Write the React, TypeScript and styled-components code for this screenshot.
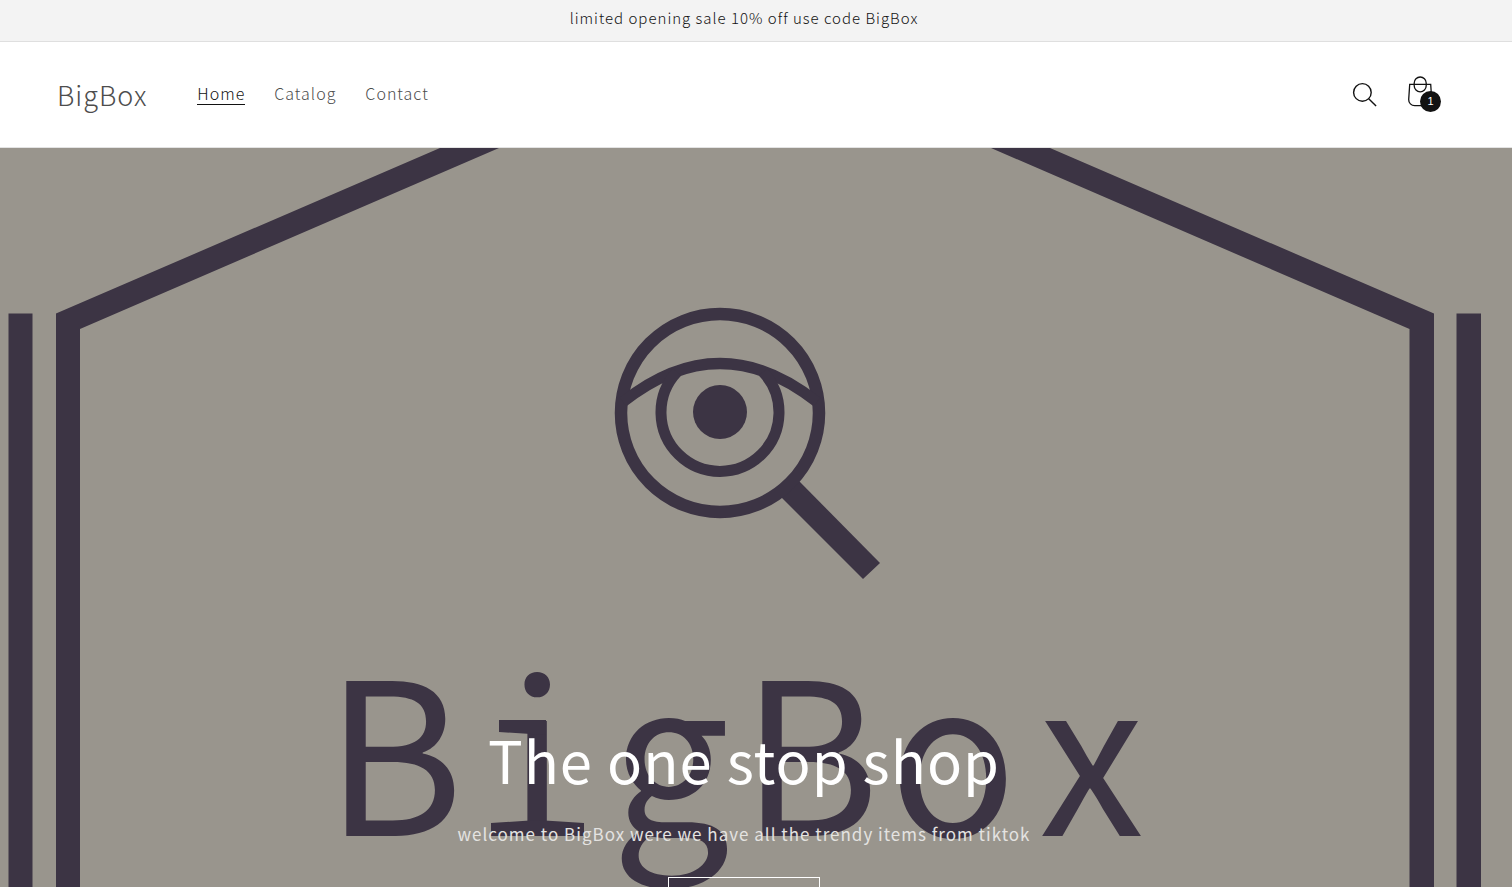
import React from 'react';
import styled, { createGlobalStyle } from 'styled-components';

const GlobalStyle = createGlobalStyle`
  *, *::before, *::after { box-sizing: border-box; }
  body {
    margin: 0;
    background: #fff;
    color: #121212;
    font-family: "Noto Sans CJK SC", "Noto Sans", sans-serif;
    font-weight: 300;
  }
`;

const Announcement = styled.div`
  padding: 6px 24px 11px 0;
  border-bottom: 1px solid #dfdfdf;
  background: #f3f3f3;
  text-align: center;
`;

const AnnouncementText = styled.p`
  margin: 0;
  font-size: 15px;
  line-height: 24px;
  letter-spacing: 1px;
`;

const Header = styled.header`
  display: flex;
  align-items: center;
  justify-content: space-between;
  height: 106px;
  padding: 0 70px 0 57px;
  border-bottom: 1px solid #e3e3e3;
`;

const HeaderStart = styled.div`
  display: flex;
  align-items: center;
  gap: 50px;
`;

const Logo = styled.a`
  color: #4d4d4d;
  font-size: 27px;
  line-height: 40px;
  letter-spacing: 1px;
  text-decoration: none;
`;

const Menu = styled.nav`
  display: flex;
  gap: 29px;
`;

const MenuLink = styled.a<{ $current?: boolean }>`
  padding-bottom: 3px;
  color: ${(p) => (p.$current ? '#121212' : '#4d4d4d')};
  font-size: 16px;
  line-height: 16px;
  letter-spacing: 1px;
  text-decoration: none;
  border-bottom: 1px solid ${(p) => (p.$current ? '#121212' : 'transparent')};
`;

const HeaderIcons = styled.div`
  display: flex;
  align-items: center;
  gap: 11px;
`;

const IconButton = styled.button`
  position: relative;
  display: grid;
  place-items: center;
  width: 44px;
  height: 44px;
  padding: 0;
  border: 0;
  background: none;
  color: #121212;
  cursor: pointer;
`;

const CartCount = styled.span`
  position: absolute;
  right: 1px;
  bottom: 5px;
  width: 21px;
  height: 21px;
  border-radius: 50%;
  background: #121212;
  color: #fff;
  font-size: 11px;
  font-weight: 400;
  line-height: 20px;
  text-align: center;
`;

const Hero = styled.section`
  position: relative;
  display: flex;
  flex-direction: column;
  align-items: center;
  justify-content: flex-end;
  min-height: 840px;
  padding: 0 24px 63px 0;
  overflow: hidden;
  background: #99958d;
  text-align: center;
`;

const HeroArt = styled.svg`
  position: absolute;
  inset: 0;
  width: 100%;
  height: 100%;
`;

const HeroContent = styled.div`
  position: relative;
  display: flex;
  flex-direction: column;
  align-items: center;
`;

const HeroTitle = styled.h1`
  margin: 0;
  color: #fff;
  font-size: 58px;
  font-weight: 400;
  line-height: 72px;
  letter-spacing: 1px;
`;

const HeroText = styled.p`
  margin: 24px 0 28px;
  color: #e4e3e1;
  font-size: 17px;
  font-weight: 400;
  line-height: 30px;
  letter-spacing: 1px;
`;

const HeroLink = styled.a`
  width: 152px;
  height: 48px;
  border: 1px solid #fff;
`;

const SearchIcon = () => (
  <svg width="26" height="26" viewBox="0 0 26 26" fill="none" stroke="currentColor" strokeWidth="1.4" aria-hidden="true">
    <circle cx="10.4" cy="10.4" r="8.8" />
    <path d="M16.700 16.700l7.400 7.400" />
  </svg>
);

const BagIcon = () => (
  <svg width="26" height="38" viewBox="0 0 26 38" fill="none" stroke="currentColor" strokeWidth="1.3" aria-hidden="true">
    <path d="M2.700 8.300h21l1 15.200a5.500 5.500 0 0 1-5.500 6.200H7.700a6 6 0 0 1-6-6.200z" />
    <rect x="7.200" y="1" width="12" height="14.800" rx="6" />
  </svg>
);

const BoxArt = () => (
  <HeroArt viewBox="0 0 1512 840" preserveAspectRatio="xMidYMin slice" aria-hidden="true">
    <g fill="#3c3444">
      <path d="M8.500 165.500H32.500V840H8.500z" />
      <path d="M1456.500 165.500H1481V840H1456.500z" />
      <path d="M56 840V165.500L440 0H499L80 181V840z" />
      <path d="M1434 840V165.500L1050 0H991L1409.500 181V840z" />
      <circle cx="720" cy="264" r="27" />
      <path d="M781 349L799 333L880 415L863 431z" />
    </g>
    <g fill="none" stroke="#3c3444">
      <circle cx="720" cy="265" r="99" strokeWidth="12.500" />
      <path d="M623 254Q720 177 817 254" strokeWidth="11" />
      <path d="M677 224A59 59 0 1 0 763 224" strokeWidth="11" />
    </g>
    <g fill="#3c3444">
      <text y="688" x="325 508 611 741 889 1039" fontSize="211" fontWeight="400">BigBox</text>
      <path d="M499 572H546V587L499 584z" />
      <path d="M491 688V675L537 672L584 675V688z" />
    </g>
  </HeroArt>
);

export default function App() {
  return (
    <>
      <GlobalStyle />
      <Announcement role="region" aria-label="Announcement">
        <AnnouncementText>limited opening sale 10% off use code BigBox</AnnouncementText>
      </Announcement>
      <Header>
        <HeaderStart>
          <Logo href="#">BigBox</Logo>
          <Menu aria-label="Main">
            <MenuLink href="#" $current aria-current="page">Home</MenuLink>
            <MenuLink href="#catalog">Catalog</MenuLink>
            <MenuLink href="#contact">Contact</MenuLink>
          </Menu>
        </HeaderStart>
        <HeaderIcons>
          <IconButton type="button" aria-label="Search"><SearchIcon /></IconButton>
          <IconButton type="button" aria-label="Cart">
            <BagIcon />
            <CartCount>1</CartCount>
          </IconButton>
        </HeaderIcons>
      </Header>
      <main>
        <Hero>
          <BoxArt />
          <HeroContent>
            <HeroTitle>The one stop shop</HeroTitle>
            <HeroText>welcome to BigBox were we have all the trendy items from tiktok</HeroText>
            <HeroLink href="#catalog" aria-label="Shop all" />
          </HeroContent>
        </Hero>
      </main>
    </>
  );
}
